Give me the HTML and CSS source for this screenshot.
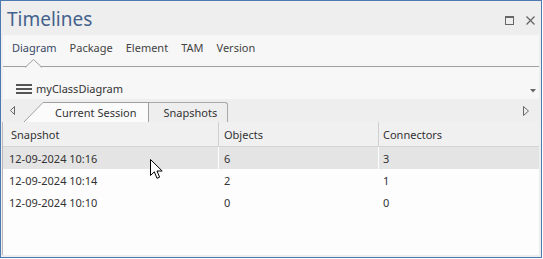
FILE: index.html
```html
<!DOCTYPE html>
<html lang="en">
<head>
    <meta charset="UTF-8">
    <title>Timelines</title>
    <link rel="stylesheet" href="styles.css">
</head>
<body>

<div class="window">
    <div class="titlebar">
        <span class="title">Timelines</span>
        <div class="win-buttons">
            <svg width="9" height="9" viewBox="0 0 9 9">
                <rect x="0.5" y="0.5" width="8" height="8" fill="none" stroke="#666"/>
                <rect x="0" y="0" width="9" height="2" fill="#666"/>
            </svg>
            <svg width="9" height="9" viewBox="0 0 9 9">
                <path d="M0.5 0.5 L8.5 8.5 M8.5 0.5 L0.5 8.5" stroke="#666" stroke-width="1.3"/>
            </svg>
        </div>
    </div>

    <div class="panel">
        <nav class="nav">
            <span class="nav-item active">Diagram
                <svg class="notch" width="17" height="9" viewBox="0 0 17 9">
                    <polygon points="0,9 8.5,0.5 17,9" fill="#f7f7f7"/>
                    <polyline points="0,8.5 8.5,0.5 17,8.5" fill="none" stroke="#a0a0a0"/>
                </svg>
            </span>
            <span class="nav-item">Package</span>
            <span class="nav-item">Element</span>
            <span class="nav-item">TAM</span>
            <span class="nav-item">Version</span>
        </nav>
        <div class="toolbar">
            <svg class="menu-icon" width="16" height="10" viewBox="0 0 16 10">
                <rect x="0" y="0" width="16" height="2" fill="#555"/>
                <rect x="0" y="4" width="16" height="2" fill="#555"/>
                <rect x="0" y="8" width="16" height="2" fill="#555"/>
            </svg>
            <span class="diagram-name">myClassDiagram</span>
            <svg class="dropdown" width="6" height="4" viewBox="0 0 6 4">
                <polygon points="0,0 6,0 3,3.5" fill="#666"/>
            </svg>
        </div>
    </div>

    <div class="tabstrip">
        <svg class="scroll-left" width="5" height="9" viewBox="0 0 5 9">
            <polygon points="4.5,0.5 0.5,4.5 4.5,8.5" fill="none" stroke="#666"/>
        </svg>
        <div class="tabs">
            <div class="tab tab-active">
                <svg class="slant" width="19" height="20" viewBox="0 0 19 20">
                    <polygon points="0,20 19,0 19,20" fill="#fbfbfb"/>
                    <line x1="0" y1="20" x2="19" y2="0.5" stroke="#a0a0a0"/>
                </svg>
                <span class="tab-label">Current Session</span>
            </div>
            <div class="tab tab-plain">Snapshots</div>
        </div>
        <svg class="scroll-right" width="6" height="10" viewBox="0 0 6 10">
            <polygon points="0.5,0.5 5.5,5 0.5,9.5" fill="none" stroke="#666"/>
        </svg>
    </div>

    <div class="grid">
        <div class="grid-header">
            <div class="cell first">Snapshot</div>
            <div class="cell">Objects</div>
            <div class="cell last">Connectors</div>
        </div>
        <div class="grid-row selected">
            <div class="cell first">12-09-2024 10:16</div>
            <div class="cell">6</div>
            <div class="cell last">3</div>
        </div>
        <div class="grid-row">
            <div class="cell first">12-09-2024 10:14</div>
            <div class="cell">2</div>
            <div class="cell last">1</div>
        </div>
        <div class="grid-row">
            <div class="cell first">12-09-2024 10:10</div>
            <div class="cell">0</div>
            <div class="cell last">0</div>
        </div>
    </div>

    <svg class="cursor" width="14" height="21" viewBox="0 0 14 21">
        <path d="M0.5 0.5 V16.5 L4.3 12.8 L7 19.3 L9.6 18.2 L7 12 H12.2 Z" fill="#fff" stroke="#000"/>
    </svg>
</div>

</body>
</html>
```

FILE: styles.css
```css
body {
    margin: 0;
    background-color: #fff;
    font-family: 'Noto Sans', sans-serif;
    font-size: 11px;
    color: #333;
}
.window {
    position: relative;
    width: 542px;
    height: 258px;
    box-sizing: border-box;
    border: 1px solid #4b79b0;
    background-color: #eeeeee;
    display: flex;
    flex-direction: column;
}
.titlebar {
    height: 34px;
    flex-shrink: 0;
    display: flex;
    align-items: flex-start;
    padding: 5px 6px 0 6px;
    box-sizing: border-box;
}
.title {
    font-size: 19px;
    line-height: 26px;
    color: #44628c;
}
.win-buttons {
    margin-left: auto;
    margin-top: 10px;
    display: flex;
    gap: 12px;
}
.win-buttons svg {
    display: block;
}
.panel {
    margin: 0 2px;
    background-color: #f7f7f7;
    flex-shrink: 0;
}
.nav {
    height: 32px;
    box-sizing: border-box;
    border-bottom: 1px solid #a0a0a0;
    display: flex;
    align-items: center;
    gap: 13px;
    padding: 0 0 6px 9px;
}
.nav-item {
    position: relative;
    color: #444;
}
.nav-item.active {
    color: #3a4866;
}
.notch {
    position: absolute;
    left: 50%;
    margin-left: -9px;
    bottom: -13px;
    display: block;
}
.toolbar {
    height: 32px;
    box-sizing: border-box;
    padding: 12px 3px 0 13px;
    display: flex;
    align-items: center;
}
.menu-icon {
    margin-right: 4px;
    display: block;
}
.diagram-name {
    font-size: 11px;
    line-height: 20px;
    color: #333;
}
.dropdown {
    margin-left: auto;
    margin-top: 3px;
    display: block;
}
.tabstrip {
    height: 23px;
    flex-shrink: 0;
    display: flex;
    align-items: flex-end;
    padding: 0 12px 0 9px;
}
.scroll-left {
    align-self: flex-start;
    margin-top: 7px;
    margin-right: 9px;
    display: block;
}
.scroll-right {
    align-self: flex-start;
    margin-top: 7px;
    margin-left: auto;
    display: block;
}
.tabs {
    display: flex;
    align-items: flex-end;
}
.tab {
    height: 20px;
    box-sizing: border-box;
    line-height: 19px;
    color: #333;
}
.tab-active {
    display: flex;
}
.slant {
    display: block;
}
.tab-label {
    background-color: #fbfbfb;
    border-top: 1px solid #a0a0a0;
    border-right: 1px solid #a0a0a0;
    padding: 0 11px 0 12px;
    height: 20px;
    box-sizing: border-box;
}
.tab-plain {
    border: 1px solid #a8a8a8;
    border-left: none;
    border-bottom: none;
    border-radius: 0 3px 0 0;
    padding: 0 10px 0 15px;
}
.grid {
    flex: 1;
    margin: 0 2px 2px 1px;
    border-left: 1px solid #b8b8b8;
    background-color: #fdfdfd;
}
.grid-header,
.grid-row {
    display: grid;
    grid-template-columns: 216px 160px 1fr;
}
.grid-header {
    height: 25px;
    box-sizing: border-box;
    background-color: #f0f0f0;
    border-bottom: 1px solid #d4d4d4;
}
.grid-header .cell {
    border-right: 1px solid #d0d0d0;
    padding-left: 5px;
}
.grid-header .cell.first {
    padding-left: 8px;
}
.grid-row {
    height: 22px;
}
.grid-row.selected {
    background-color: #e4e4e4;
}
.cell {
    display: flex;
    align-items: center;
    padding-left: 5px;
    border-right: 1px solid #fdfdfd;
    color: #333;
}
.grid-row .cell.first {
    padding-left: 6px;
}
.grid-header .cell.last,
.cell.last {
    border-right: none;
    padding-left: 4px;
}
.cursor {
    position: absolute;
    left: 149px;
    top: 158px;
}
```
